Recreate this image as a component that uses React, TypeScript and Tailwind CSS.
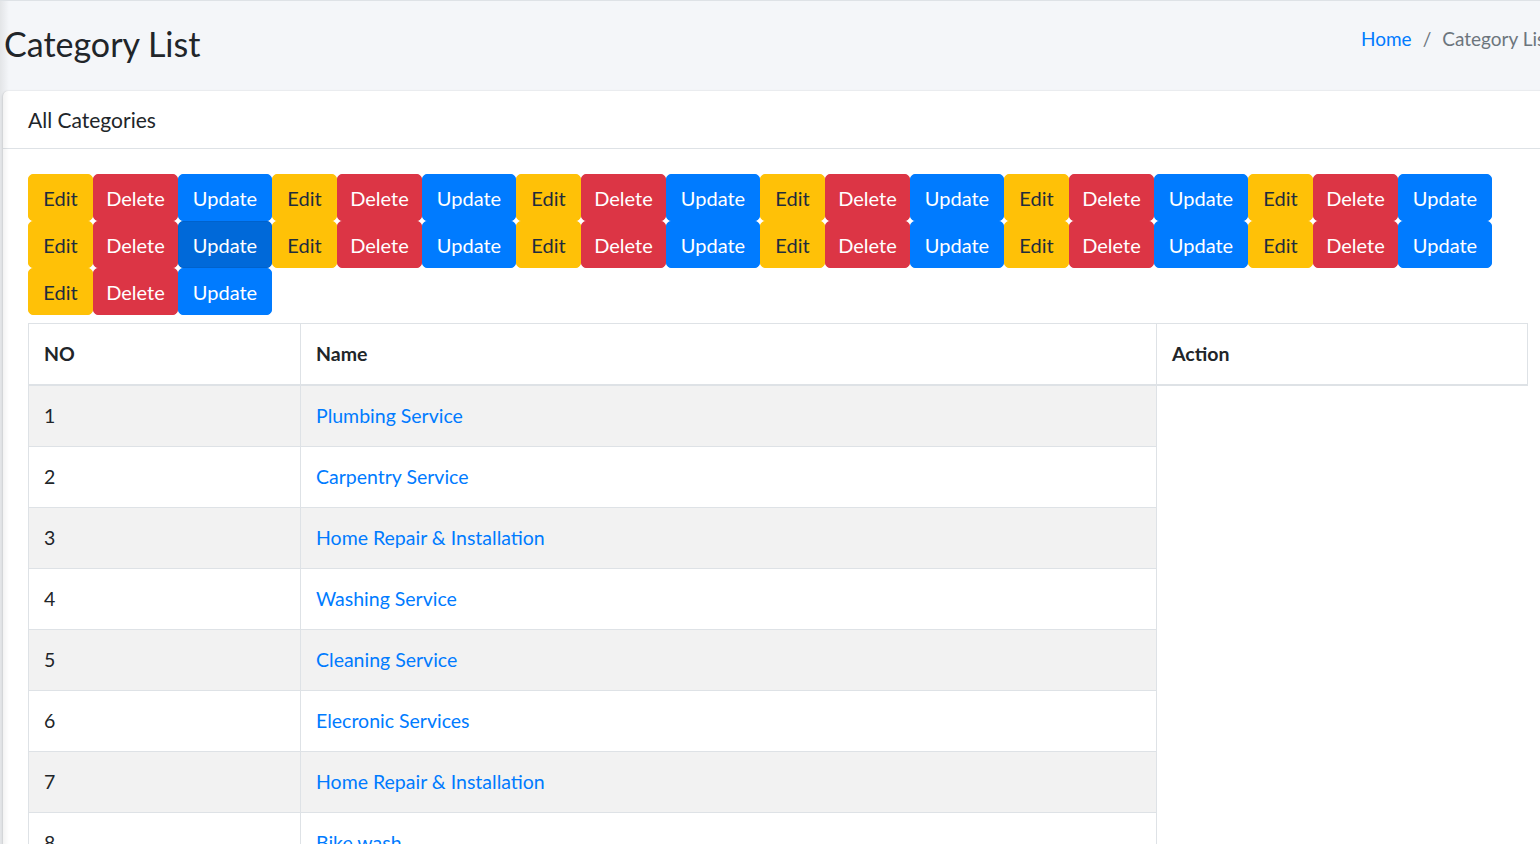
import React from "react";

const categories = [
  "Plumbing Service",
  "Carpentry Service",
  "Home Repair & Installation",
  "Washing Service",
  "Cleaning Service",
  "Elecronic Services",
  "Home Repair & Installation",
  "Bike wash",
];

const groups = Array.from({ length: 13 }, (_, i) => i);

const App = () => (
  <div
    className="relative w-[1540px] h-[844px] overflow-hidden bg-[#f4f6f9] border-t border-[#dee2e6] text-[#212529]"
    style={{ fontFamily: "Lato, 'Noto Sans', sans-serif" }}
  >
    <div className="w-[1552px] pl-[3px]">
      {/* content header */}
      <div className="h-[90px] flex justify-between items-start">
        <h1 className="mt-[22px] ml-[1px] text-[34px] leading-[41px] font-normal text-[#212529]">Category List</h1>
        <div className="mt-[23px] flex items-center text-[19px] leading-[30px]">
          <a className="text-[#007bff]">Home</a>
          <span className="px-[11px] text-[#6c757d]">/</span>
          <span className="text-[#6c757d]">Category List</span>
        </div>
      </div>

      {/* card */}
      <div className="w-[1549px] bg-white rounded-[5px] shadow-[0_0_1px_rgba(0,0,0,0.125),0_1px_3px_rgba(0,0,0,0.2)]">
        <div className="px-[25px] pt-[15px] pb-[14px] border-b border-[#dee2e6] text-[21px] leading-[28px]">
          All Categories
        </div>
        <div className="p-[25px]">
          <div className="flex flex-wrap w-[1499px]">
            {groups.map((g) => (
              <div key={g} className="flex">
                <button className="w-[65px] h-[47px] rounded-[5px] bg-[#ffc107] border border-[#ffc107] text-[#1f2d3d] text-[20px]">
                  Edit
                </button>
                <button className="w-[85px] h-[47px] rounded-[5px] bg-[#dc3545] border border-[#dc3545] text-white text-[20px]">
                  Delete
                </button>
                <button
                  className={`w-[94px] h-[47px] rounded-[5px] text-white text-[20px] border ${
                    g === 6 ? "bg-[#0069d9] border-[#0062cc]" : "bg-[#007bff] border-[#007bff]"
                  }`}
                >
                  Update
                </button>
              </div>
            ))}
          </div>

          <table className="mt-[8px] w-[1499px] table-fixed border-collapse text-[19.5px] leading-[30px]">
            <thead>
              <tr>
                <th className="w-[272px] text-left font-bold px-[15px] py-[15px] border border-[#dee2e6] border-b-2">NO</th>
                <th className="w-[856px] text-left font-bold px-[15px] py-[15px] border border-[#dee2e6] border-b-2">Name</th>
                <th className="w-[371px] text-left font-bold px-[15px] py-[15px] border border-[#dee2e6] border-b-2">Action</th>
              </tr>
            </thead>
            <tbody>
              {categories.map((name, i) => (
                <tr key={i}>
                  <td className={`px-[15px] py-[15px] border border-[#dee2e6] ${i % 2 === 0 ? "bg-[#f2f2f2]" : "bg-white"}`}>
                    {i + 1}
                  </td>
                  <td className={`px-[15px] py-[15px] border border-[#dee2e6] ${i % 2 === 0 ? "bg-[#f2f2f2]" : "bg-white"}`}>
                    <a className="text-[#007bff]">{name}</a>
                  </td>
                </tr>
              ))}
            </tbody>
          </table>
        </div>
      </div>
    </div>

    {/* sidebar shadow */}
    <div className="pointer-events-none absolute left-0 top-0 h-full w-[9px] bg-gradient-to-r from-[rgba(0,0,0,0.07)] to-transparent" />
  </div>
);

export default App;
